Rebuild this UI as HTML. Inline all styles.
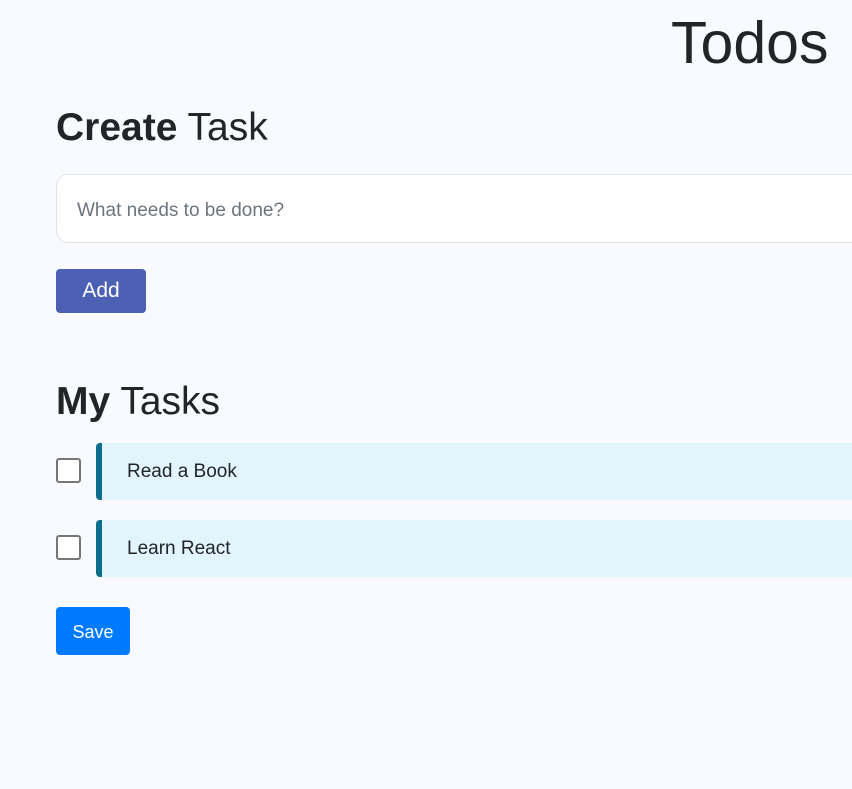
<!DOCTYPE html>
<html><head><style>
body{margin:0;width:852px;height:789px;background:#f8faff;font-family:"Liberation Sans",sans-serif;color:#212529;position:relative;overflow:hidden}
.a{position:absolute;white-space:nowrap}
.cb{position:absolute;left:56px;width:21px;height:21px;border:2px solid #767676;border-radius:3px;background:#fff}
.item{position:absolute;left:96px;width:760px;height:57px;background:#e3f5fc;border-left:6px solid #0a6e8c;border-radius:4px 0 0 4px;box-sizing:border-box;font-size:19px;line-height:57px;padding-left:25px}
</style></head><body>
<div class="a" style="left:671px;top:8px;font-size:59px;line-height:70px">Todos</div>
<div class="a" style="left:56px;top:104px;font-size:39px;line-height:48px"><b>Create</b> Task</div>
<div class="a" style="left:56px;top:174px;width:820px;height:69px;box-sizing:border-box;border:1px solid #e2e4ea;border-radius:12px;background:#fff"></div>
<div class="a" style="left:77px;top:199px;font-size:19px;line-height:24px;color:#6c757d">What needs to be done?</div>
<div class="a" style="left:56px;top:269px;width:90px;height:44px;background:#4c60b4;border-radius:4px;color:#fff;font-size:21px;line-height:44px;text-align:center">Add</div>
<div class="a" style="left:56px;top:378px;font-size:39px;line-height:48px"><b>My</b> Tasks</div>
<div class="cb" style="top:458px"></div>
<div class="item" style="top:443px">Read a Book</div>
<div class="cb" style="top:535px"></div>
<div class="item" style="top:520px">Learn React</div>
<div class="a" style="left:56px;top:607px;width:74px;height:48px;background:#007bff;border-radius:4px;color:#fff;font-size:18px;line-height:51px;text-align:center">Save</div>
</body></html>
